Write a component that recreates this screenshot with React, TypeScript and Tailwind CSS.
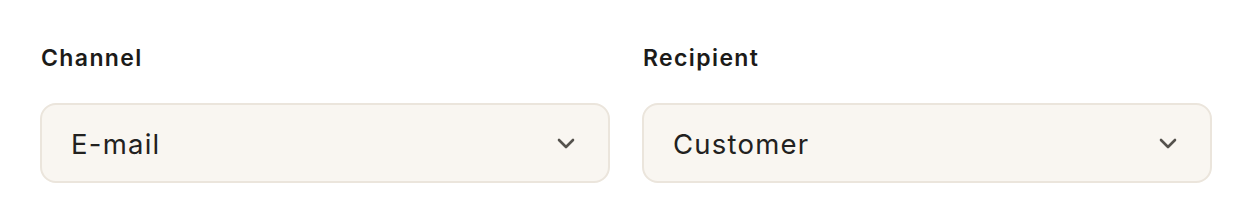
import React from "react";

function Chevron() {
  return (
    <svg width="18" height="11" viewBox="0 0 18 11" fill="none" stroke="#55524d" strokeWidth="2.6" strokeLinecap="round" strokeLinejoin="round">
      <path d="M2 2l7 7 7-7" />
    </svg>
  );
}

function Field({ label, value }: { label: string; value: string }) {
  return (
    <div className="flex flex-col">
      <label className="text-[23px] leading-[28px] font-semibold text-[#1c1b19] pl-px tracking-[0.06em]">{label}</label>
      <div className="mt-[31px] h-[80px] rounded-[16px] border-2 border-[#ebe5dc] bg-[#f9f6f1] flex items-center justify-between pl-[29px] pr-[33px]">
        <span className="text-[27.5px] leading-[34px] pt-px text-[#222120] tracking-[0.045em]">{value}</span>
        <Chevron />
      </div>
    </div>
  );
}

export default function App() {
  return (
    <div className="w-[1252px] h-[224px] bg-white pt-[44px] px-10" style={{ fontFamily: "Inter, 'Noto Sans', sans-serif" }}>
      <div className="grid grid-cols-2 gap-8">
        <Field label="Channel" value="E-mail" />
        <Field label="Recipient" value="Customer" />
      </div>
    </div>
  );
}
